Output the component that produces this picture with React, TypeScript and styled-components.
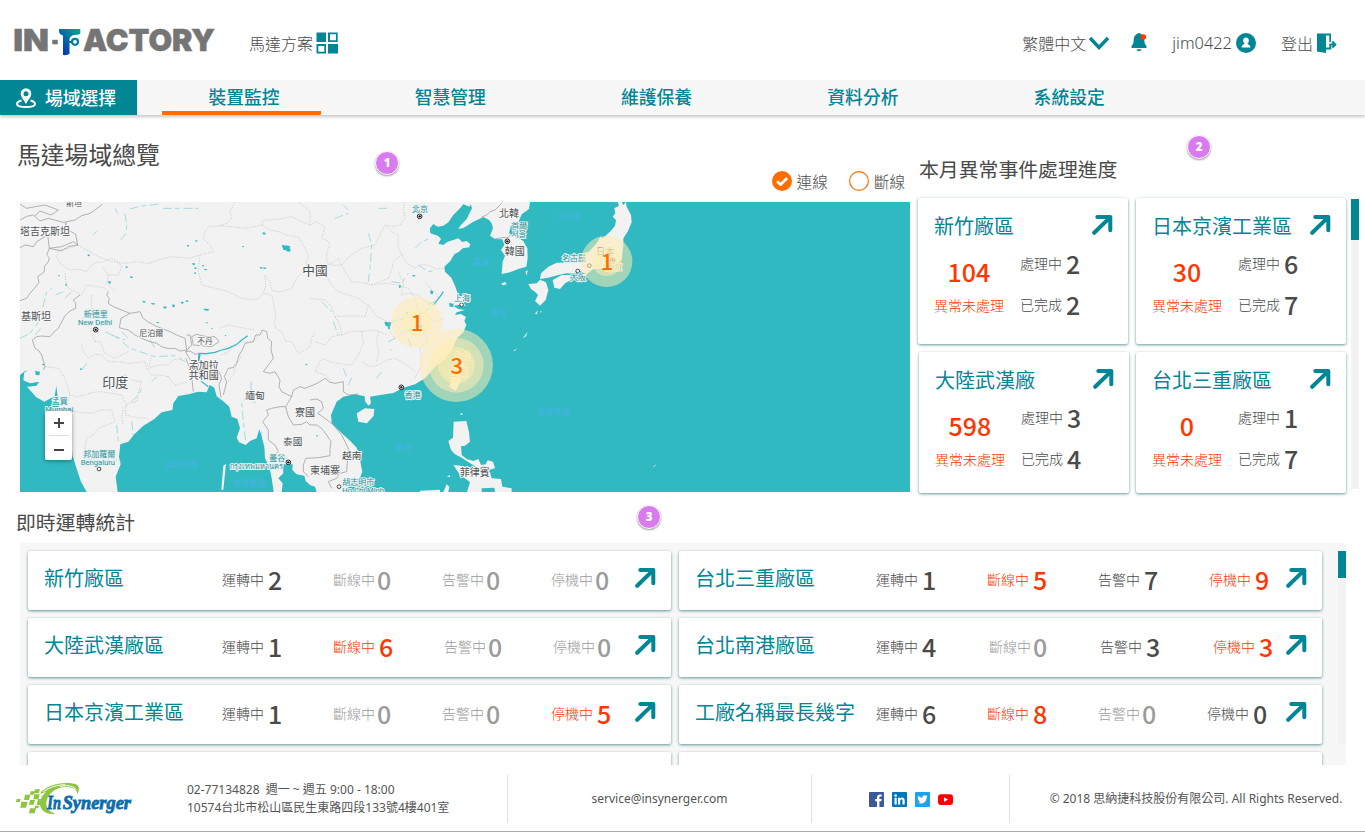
import React from "react";
import styled, { createGlobalStyle } from "styled-components";

const TEAL = "#008695";
const ORANGE = "#ff6d00";
const RED = "#ff3600";
const INK = "#4a4a4a";
const CJK = `"Noto Sans CJK TC", sans-serif`;
const LATIN = `"Noto Sans", "Noto Sans CJK TC", sans-serif`;

const GlobalStyle = createGlobalStyle`
  * { box-sizing: border-box; }
  body { margin: 0; background: #fff; color: ${INK}; font-family: ${CJK}; }
`;

const Page = styled.div`
  width: 1365px;
  height: 832px;
  overflow: hidden;
  display: flex;
  flex-direction: column;
  border-bottom: 1px solid #a9a9a9;
`;

/* ---------- header ---------- */
const Header = styled.header`
  height: 80px;
  display: flex;
  align-items: flex-start;
  padding: 26px 28px 0 14px;
`;
const HeaderItem = styled.div<{ $ml?: number; $gap?: number; $latin?: boolean }>`
  display: flex;
  align-items: center;
  height: 34px;
  margin-left: ${(p) => p.$ml ?? 0}px;
  gap: ${(p) => p.$gap ?? 4}px;
  font: ${(p) => (p.$latin ? `300 16.400px/34px ${LATIN}` : `300 16px/34px ${CJK}`)};
`;
const Spacer = styled.div`
  flex: 1;
`;

/* ---------- navigation ---------- */
const Nav = styled.nav`
  flex: none;
  height: 35px;
  display: flex;
  background: #f7f7f7;
  box-shadow: 0 2px 3px rgba(0, 0, 0, 0.22);
`;
const SiteButton = styled.div`
  width: 137px;
  display: flex;
  align-items: center;
  padding-left: 15px;
  gap: 8px;
  background: ${TEAL};
  color: #fff;
  font: 500 17.800px/33px ${CJK};
`;
const Tabs = styled.div`
  display: flex;
  gap: 47.300px;
  margin-left: 25px;
`;
const Tab = styled.div<{ $active?: boolean }>`
  width: 159px;
  padding-left: 5px;
  text-align: center;
  color: ${TEAL};
  font: 500 17.800px/32px ${CJK};
  border-bottom: 4px solid ${(p) => (p.$active ? ORANGE : "transparent")};
  border-radius: 1px;
`;

/* ---------- overview ---------- */
const Overview = styled.section`
  flex: none;
  height: 381px;
  display: flex;
  position: relative;
`;
const MapColumn = styled.div`
  width: 910px;
  padding-left: 20px;
`;
const MapHeader = styled.div`
  height: 87px;
  display: flex;
  justify-content: space-between;
  align-items: flex-start;
  margin-left: -3px;
`;
const Title = styled.h1`
  margin: 0;
  padding-top: 19px;
  font: 400 23.800px/39px ${CJK};
`;
const Filters = styled.div`
  display: flex;
  gap: 21px;
  padding: 56px 5px 0 0;
`;
const Filter = styled.div`
  display: flex;
  align-items: center;
  gap: 5px;
  font: 300 15.600px/19px ${CJK};
`;
const MapFrame = styled.div`
  width: 890px;
  height: 290px;
  position: relative;
  overflow: hidden;
  background: #31b9c2;
  svg { display: block; }
`;
const ZoomControl = styled.div`
  position: absolute;
  left: 25px;
  top: 209px;
  width: 27px;
  height: 49px;
  display: flex;
  flex-direction: column;
  align-items: center;
  background: #fff;
  border-radius: 2px;
  box-shadow: 0 1px 4px rgba(0, 0, 0, 0.4);
`;
const ZoomButton = styled.div`
  height: 24px;
  width: 20px;
  display: grid;
  place-items: center;
  & + & { border-top: 1px solid #ddd; height: 25px; padding-top: 3px; }
`;

const EventColumn = styled.div`
  flex: 1;
  padding-left: 8px;
`;
const SectionTitle = styled.h2<{ $pt: number; $h: number }>`
  margin: 0 0 0 1px;
  height: ${(p) => p.$h}px;
  padding-top: ${(p) => p.$pt}px;
  font: 400 19.850px/28px ${CJK};
`;
const EventBody = styled.div`
  display: flex;
  gap: 5px;
`;
const EventGrid = styled.div`
  display: grid;
  grid-template-columns: 210px 210px;
  grid-template-rows: 146px 141px;
  gap: 8px;
`;
const cardShadow = `
  background: #fff;
  border-radius: 2px;
  box-shadow: 0 1px 3px rgba(0, 90, 95, 0.62);
`;
const EventCard = styled.article<{ $shift?: boolean }>`
  ${cardShadow}
  height: 100%;
  padding: 13px 15px 0 16px;
  margin: 0 ${(p) => (p.$shift ? "-1px 0 1px" : "0")};
`;
const CardHead = styled.div`
  display: flex;
  justify-content: space-between;
  height: 38px;
  padding-top: 3px;
  svg { margin-top: 1px; }
`;
const SiteName = styled.div`
  color: ${TEAL};
  font: 400 20px/23px ${CJK};
  white-space: nowrap;
`;
const CardBody = styled.div`
  display: flex;
  gap: 16px;
`;
const Pending = styled.div`
  width: 70px;
  color: ${RED};
  text-align: center;
`;
const Big = styled.div`
  height: 47px;
  font: 500 25px/44px ${CJK};
`;
const Caption = styled.div`
  font: 300 14px/18px ${CJK};
`;
const Progress = styled.div`
  display: flex;
  flex-direction: column;
`;
const Line = styled.div`
  height: 40.500px;
  display: flex;
  gap: 4px;
  font: 300 14px/28px ${CJK};
`;
const Num = styled.span`
  font: 500 25px/28px ${CJK};
`;
const Scrollbar = styled.div<{ $h: number; $thumb: number; $top: number }>`
  width: 8px;
  height: ${(p) => p.$h}px;
  margin-top: ${(p) => p.$top}px;
  background: linear-gradient(${TEAL}, ${TEAL}) top / 8px ${(p) => p.$thumb}px no-repeat #f2f2f2;
`;

const Badge = styled.div<{ $x: number; $y: number }>`
  position: absolute;
  left: ${(p) => p.$x - 12}px;
  top: ${(p) => p.$y - 12}px;
  width: 24px;
  height: 24px;
  border: 1px solid #fff;
  border-radius: 50%;
  background: #d97bee;
  box-shadow: 0 1px 2px rgba(0, 0, 0, 0.4);
  color: #fff;
  text-align: center;
  font: 800 11.500px/22px "Open Sans", sans-serif;
`;

/* ---------- live statistics ---------- */
const Stats = styled.section`
  flex: none;
  height: 269px;
  padding-left: 20px;
  position: relative;
`;
const StatsTitleRow = styled.div`
  height: 47px;
  margin-left: -5px;
`;
const StatsPanel = styled.div`
  width: 1326px;
  height: 222px;
  padding: 8px 0 0 8px;
  display: flex;
  gap: 16px;
  background: #f7f7f7;
  overflow: hidden;
`;
const StatsGrid = styled.div`
  display: grid;
  grid-template-columns: 643px 643px;
  grid-auto-rows: 59px;
  gap: 8px;
`;
const StatCard = styled.article`
  ${cardShadow}
  display: flex;
  padding: 0 15px 0 16px;
`;
const StatName = styled(SiteName)<{ $w: number }>`
  flex: none;
  width: ${(p) => p.$w - 16}px;
  line-height: 53px;
`;
type Tone = "normal" | "muted" | "alert";
const toneColor: Record<Tone, string> = { normal: INK, muted: "#9b9b9b", alert: RED };
const Stat = styled.div<{ $tone: Tone; $w: number; $shift: number; $gap: number }>`
  flex: none;
  width: ${(p) => p.$w}px;
  padding-left: ${(p) => p.$shift}px;
  display: flex;
  gap: ${(p) => p.$gap}px;
  white-space: nowrap;
  color: ${(p) => toneColor[p.$tone]};
  font: 300 14px/56px ${CJK};
  ${Num} { line-height: 57px; }
`;
const StatArrow = styled.div`
  flex: 1;
  display: flex;
  justify-content: flex-end;
  padding-top: 17px;
`;

/* ---------- footer ---------- */
const Footer = styled.footer`
  flex: 1;
  display: flex;
  padding-top: 10px;
  font: 400 12px/18px ${LATIN};
  color: #555;
`;
const FootCell = styled.div<{ $w: number; $pl?: number }>`
  flex: none;
  width: ${(p) => p.$w}px;
  height: 48px;
  display: flex;
  align-items: center;
  justify-content: center;
  gap: 8px;
  padding-left: ${(p) => p.$pl ?? 0}px;
  white-space: nowrap;
  & + & { border-left: 1px solid #e1e1e1; }
`;
const Address = styled.div`
  width: 312px;
  white-space: pre;
`;
const Contact = styled(FootCell)`
  justify-content: flex-start;
  gap: 55px;
`;

/* ---------- icons ---------- */
const Arrow = () => (
  <svg width="21" height="20" viewBox="0 0 21 20" fill="none" stroke={TEAL} strokeWidth="4" strokeLinecap="round" strokeLinejoin="round">
    <path d="M5.3 2H18.3V15.3M18 2.4L2.2 17.8" />
  </svg>
);

const FactoryLogo = () => (
  <svg width="202" height="32" viewBox="0 0 202 32">
    <defs>
      <linearGradient id="flag" x1="1" y1="0" x2="0.2" y2="1">
        <stop offset="0" stopColor="#00b07f" />
        <stop offset="0.4" stopColor="#0079a0" />
        <stop offset="1" stopColor="#0735b5" />
      </linearGradient>
    </defs>
    <g fill="#757575" stroke="#757575" strokeWidth="0.500" fontFamily="Inter, sans-serif" fontWeight="900" fontSize="30.4">
      <text x="-0.700" y="25" textLength="35.700" lengthAdjust="spacingAndGlyphs">IN</text>
      <rect x="38.300" y="13.800" width="5.500" height="4.500" stroke="none" />
      <text x="69" y="25" textLength="132" lengthAdjust="spacingAndGlyphs">ACTORY</text>
    </g>
    <path d="M45 3H66.300V7.500Q65 9 62 8.700Q57 9 55.500 12.500V28Q53 29.500 49 29V9.500Q45 8.500 45 5Z" fill="url(#flag)" />
    <circle cx="61" cy="15.800" r="5.200" fill="#fff" />
    <circle cx="61" cy="15.800" r="3" fill="none" stroke="#0080a4" strokeWidth="2.200" />
    <path d="M55 15H58V17H55Z" fill="#0070a8" />
  </svg>
);

const GridIcon = () => (
  <svg width="22" height="22" viewBox="0 0 22 22" fill={TEAL}>
    <rect x="0.500" y="0.500" width="9.500" height="9.500" />
    <rect x="12" y="12" width="10" height="9.500" />
    <path d="M12 .5h9.700V10H12ZM14 2.200V8.300h6V2.200ZM.5 12H10v9.500H.5ZM2.300 14v5.700h6V14Z" fillRule="evenodd" />
  </svg>
);

const PinIcon = () => (
  <svg width="22" height="22" viewBox="0 0 22 22" fill="none">
    <path d="M6.500 13.500C3.500 14.300 2 15.600 2 17c0 2 3.600 3 9 3s9-1 9-3c0-1.400-1.500-2.700-4.500-3.500" stroke="#fff" strokeWidth="2" />
    <path d="M11 1.200a5.300 5.300 0 0 0-5.300 5.300C5.700 10.400 8.800 12.400 11 17c2.200-4.600 5.300-6.600 5.300-10.500A5.300 5.300 0 0 0 11 1.200Z" fill="#fff" />
    <circle cx="11" cy="6.700" r="2.500" fill={TEAL} />
  </svg>
);

const InSynergerLogo = () => (
  <svg width="116" height="34" viewBox="18 21 348 102">
    <g fill="#8cc63f">
      <path d="M20 72h12l-2 9H18ZM34 80h19l-5 18H31ZM45 59h16l-4 16H42ZM60 75h15l-4 14H57ZM75 43h15l-4 12H72ZM62 49h12l-3 10H60ZM73 58h16l-4 15H70ZM60 100h18l-4 15H57ZM84 72h10l-4 18H80ZM75 92h12l-2 8H74Z" />
      <path d="M92 52C112 30 150 22 178 24C208 26 212 38 202 58C202 40 180 34 158 37C128 42 112 62 109 82C107 100 120 112 136 116C110 120 90 106 90 86C90 72 97 60 108 50L92 56Z" />
    </g>
    <path d="M100 50C122 35 140 30 166 29M150 34C176 30 190 33 199 44" fill="none" stroke="#fff" strokeWidth="3" />
    <g fontFamily="'Liberation Serif', serif" fontWeight="700" fontStyle="italic" fontSize="57" fill="#0d6caa" stroke="#0d6caa" strokeWidth="2.500">
      <text x="112" y="103" textLength="41" lengthAdjust="spacingAndGlyphs">In</text>
      <text x="158" y="103" textLength="205" lengthAdjust="spacingAndGlyphs">Synerger</text>
    </g>
  </svg>
);

const Social = () => (
  <>
    <svg width="15" height="15" viewBox="0 0 15 15"><rect width="15" height="15" rx="0.800" fill="#3b5998" /><path d="M8 15V9.200H6.200V7H8V5.400C8 3.500 9.200 2.500 10.900 2.500h1.800v2h-1.200c-.9 0-1.100.5-1.100 1.200V7h2.200l-.3 2.200h-1.900V15Z" fill="#fff" /></svg>
    <svg width="15" height="15" viewBox="0 0 15 15"><rect width="15" height="15" rx="0.800" fill="#0077b5" /><g fill="#fff"><circle cx="3.600" cy="3.500" r="1.300" /><path d="M2.500 5.700h2.200v6.800H2.500ZM6 5.700h2.100v1c.9-1.700 4.600-1.800 4.600 1.700v4.100h-2.200V9c0-2-2.300-1.800-2.300 0v3.500H6Z" /></g></svg>
    <svg width="15" height="15" viewBox="0 0 15 15"><rect width="15" height="15" rx="0.800" fill="#1da1f2" /><path d="M12.600 4.500l-1 1c.1 4.800-5 7.600-9.100 5.300 1.100.1 2.200-.2 3-.9-1-.1-1.700-.7-2-1.500h1C3.200 8 2.700 7.200 2.800 6.200l.9.300C2.800 5.800 2.600 4.500 3.100 3.600 4.200 4.900 5.600 5.700 7.400 5.800c-.5-2.200 2-3.500 3.500-2l1.400-.5-.9 1.200Z" fill="#fff" /></svg>
    <svg width="15" height="15" viewBox="0 0 15 15"><rect y="2.200" width="15" height="10.800" rx="3" fill="#f00" /><path d="M6 5.300l4 2.300-4 2.300Z" fill="#fff" /></svg>
  </>
);

/* ---------- map ---------- */
const LAND = [
  "M15 21H1340L1335 40L1315 60L1300 82L1285 92L1268 95L1255 87L1245 100L1246 115L1270 123L1278 132L1270 146L1285 150L1298 140L1315 135L1330 130L1342 141L1355 138L1366 148L1363 157L1343 160L1332 170L1318 178L1306 198L1288 215L1290 230L1309 248L1320 272L1330 300L1350 312L1345 322L1352 333L1330 330L1315 333L1330 342L1350 345L1325 352L1320 360L1338 357L1353 366L1348 378L1354 390L1345 412L1326 430L1312 462L1292 490L1260 515L1230 550L1200 568L1165 578L1135 594L1095 600L1065 605L1068 625L1060 632L1050 618L1049 604L1020 598L985 605L965 620L948 660L950 685L970 705L1005 737L1025 758L1034 790L1042 830L1035 848L1012 862L998 870L985 891H905L900 875L885 870L872 858L868 842L845 838L832 825L833 808L803 808L805 835L790 850L803 865L800 891H776L770 850L763 815L750 790L748 755L740 725L733 702L725 730L705 738L692 750L672 742L665 728L675 700L667 672L650 665L643 635L628 622L605 604L598 578L584 570L575 592L550 590L520 598L490 603L475 625L472 645L440 652L418 672L385 692L358 718L340 740L316 748L312 785L317 808L302 845L308 891H215L198 860L183 815L172 780L168 710L155 668L132 640L124 573L119 603L88 620L63 606L36 575L65 572L72 560L45 565L25 556L28 532L50 522L75 520L90 527L60 524L30 528L15 540Z",
  "M1365 21L1371 40L1355 72L1336 92L1330 102L1345 99L1375 80L1405 66L1422 75L1430 85L1434 100L1425 122L1440 132L1462 133L1468 150L1458 165L1470 182L1463 200L1460 237L1485 232L1510 222L1534 215L1538 190L1537 160L1525 138L1504 125L1482 114L1488 92L1510 82L1520 58L1542 42L1545 21Z",
  "M1335 21H1370L1364 35L1345 28L1335 40Z",
  "M1025 655L1050 640L1078 642L1076 662L1056 685L1030 680Z",
  "M1302 575L1320 520L1340 500L1348 505L1340 550L1323 588Z",
  "M1316 680L1354 678L1362 712L1365 740L1350 752L1338 754L1340 780L1355 792L1375 798L1390 792L1398 810L1412 808L1418 796L1434 800L1440 820L1420 825L1408 812L1390 820L1370 808L1340 788L1320 778L1308 765L1300 738L1314 728Z",
  "M1315 810L1338 812L1350 830L1370 838L1390 825L1405 830L1425 832L1430 850L1458 852L1462 875L1490 880V891H1440L1438 878L1400 880V891H1356L1365 862L1350 850L1335 840Z",
  "M1285 891L1295 868L1303 875L1300 891ZM1215 887L1275 884V891H1215ZM1384 800L1390 797V808ZM1337 655h5v5h-5Z",
  "M1540 267L1565 265L1575 254L1593 262L1600 285L1592 315L1575 332L1560 318L1569 300L1560 290L1548 282Z",
  "M1613 255L1640 240L1664 240L1668 255L1650 265L1635 282L1618 278Z",
  "M1575 252L1578 235L1600 215L1625 203L1680 202L1700 175L1720 172L1745 145L1756 125L1764 130L1790 105L1800 92L1803 75L1793 65L1801 55L1798 40L1812 32L1808 21H1820L1825 30L1833 21L1835 35L1848 60L1850 82L1838 110L1825 130L1825 150L1820 195L1800 210L1765 222L1735 222L1715 238L1695 228L1680 236L1655 235L1630 240L1600 248Z",
  "M1458 267l12-7 5 8-10 3ZM1531 230l7-4-3 16ZM1560 356l8-10-2 12ZM1575 350l5-2-2 5ZM1523 430l15-20-5 14ZM1495 468l12-10-8 10ZM1515 440l5-6ZM1913 817l10-9-3 6ZM2430 855l5-5ZM1520 285l10-5ZM1295 845l10-5v6ZM625 812l8-6-8 78h-6Z",
];

const COUNTRY_BORDERS = [
  "M15 75L35 64L55 60L75 78L100 70L145 82L180 75L200 62L225 55L240 45L262 28M15 28L35 40L55 36L90 30L130 45L108 60L75 48L60 62",
  "M15 158L30 150L55 155L65 140L98 120L120 108L150 95L155 82",
  "M98 120L103 160L140 168L160 155L188 150L175 140L140 155L103 160L95 180L103 188L100 200L88 215L88 230L68 245L72 262L60 278L45 295L35 310L15 317",
  "M150 85L160 105L182 118L188 150M195 300L175 315L182 325L182 340L165 348L150 362L138 385L130 400L118 410L105 425L80 423L65 425L52 435L60 460L72 468L80 480L90 515L85 525",
  "M280 290L275 300L283 310L280 325L295 335L320 345L345 355M345 355L375 350L383 368L398 380L420 392L440 400L470 412L485 420L510 430L515 465L495 468L480 460L460 461L440 455L425 445L405 440L380 430L360 420L340 405L313 398L318 370L345 355",
  "M530 425L545 418L575 425L600 425L612 440L590 455L560 452L535 450ZM515 420L525 420L530 450L512 470L520 485L530 500M512 470L525 468L540 478L560 475",
  "M535 590L530 545L525 520L512 490M618 608L612 570L620 550L612 530M625 600L635 560L628 545L640 520L655 518L665 505L672 480L682 465L690 445L715 440L722 420L735 420L742 405L755 410L758 430L770 440L768 465L775 490L760 510L745 530L765 535L780 530L795 555L792 575L800 590L830 605L835 585L855 575L870 580L900 568L915 560L930 550L945 562L960 565L985 560L985 590L1000 600L1030 597",
  "M743 680L760 705L760 735L780 750L790 770L775 785L780 800M743 680L760 660L755 645L770 640L795 635L812 635L830 605M812 635L820 665L835 690L860 688L875 680L885 690L905 690L920 700L935 720L948 740L945 760L945 782L910 788L872 790L865 810L865 830L880 845",
  "M885 615L905 612L920 620L925 640L908 655L930 670L955 690L980 720L1000 760L998 790L995 830L975 835L965 850L940 860L950 880",
  "M1400 66L1415 60L1425 50L1440 45L1460 25M1440 132L1460 128L1480 128L1485 120L1492 115",
];
const PROVINCES = [
  "M188 150L215 165L250 185L290 200L330 205L365 200L400 205L440 192L470 185L520 190L555 180L550 230L560 270L600 280L640 290L680 310L715 315L730 312L745 295L770 300L775 320L783 360L778 385L783 400L800 410L812 438L830 440L850 475L870 465L885 455L890 430L900 410",
  "M188 150L160 160L130 165L125 185L135 205L165 225L190 222L215 230L235 205L265 200L290 190L310 200L320 215L310 240L280 240L262 215M150 235L152 260L160 280L200 300L215 270L245 275L270 280L280 290",
  "M280 240L275 265L300 290M555 180L595 170L585 150L565 130L570 110L580 95L615 92L635 85L650 70L645 50L660 21M615 92L650 95L690 100L715 95L740 90L765 105L790 110L820 122L850 125L865 150L880 180L870 225L845 250L830 280L800 290L785 290L770 285L765 260L750 240L752 275L745 295",
  "M740 90L745 75L760 75L795 72L830 65L860 80L885 90L885 50L850 21",
  "M885 90L905 80L930 95L920 130L940 138L945 150L935 175L935 200L955 212L980 210L995 192L1010 180L1040 160L1080 150L1095 120L1110 90L1130 95L1155 90L1170 70L1165 45L1170 21M1110 90L1130 110L1150 120L1148 150L1160 180L1135 200L1130 225L1120 250L1070 270L1040 262L1010 260L990 230L970 190L950 205L930 215L935 245L950 270L970 290L1000 300L1030 310L1060 330L1055 350L1050 365L1010 362L960 365L950 335L930 315L885 310",
  "M1160 180L1175 205L1200 220L1220 208L1240 210L1265 222L1290 220M1150 230L1165 265L1160 300L1185 295L1210 300L1235 322L1260 330L1270 300L1245 280L1230 260M1070 270L1110 265L1150 270L1180 280L1200 310L1210 350L1235 360L1260 380L1290 370M1060 330L1085 365L1120 380L1125 410L1140 430L1170 410L1200 400L1225 415L1240 440L1215 460L1220 490L1215 520L1200 550",
  "M960 365L975 390L980 420L950 425L930 450L900 440M980 420L1010 408L1040 410L1080 405L1120 420M1040 500L1065 515L1090 510L1115 495L1140 490L1170 505L1200 530M1040 410L1045 445L1030 480L1010 510L960 505L920 490L900 530L930 540L950 560M1090 410L1085 440L1092 470L1085 500",
  "M90 515L130 520L150 550L165 600L185 605L210 600L230 592L260 590L290 595L320 600L335 630L330 660L365 668L400 670M200 450L205 470L220 490L240 478L260 480L280 500L310 500L340 505L390 500L395 520L410 540L435 540L460 545",
  "M300 550L330 540L350 555L380 560L370 590L365 620L340 625L325 640L320 665L325 690M165 600L150 640L175 650L230 655L260 645L290 645L300 680L275 690L250 700L235 720L215 730L210 760L210 790L260 800L290 790L320 800M410 480L405 500L400 520L430 510L460 510L475 495L500 490",
  "M460 545L470 560L480 570L520 560M230 300L228 330L240 350L215 360L200 370L210 385L225 400L240 440M340 470L320 480L300 490L270 475L255 440L240 440M640 560L655 540L660 520L680 480M620 480L640 470L655 458L680 440L710 440L730 425M612 400L640 390L690 400L720 405",
];
const RIVERS = [
  "M330 55L335 90L333 115L313 140M345 42L380 33L430 27M445 40H550M300 40L308 55M235 120L245 108",
  "M15 430L45 415L75 375L85 330L95 290L110 280M122 300L145 290M150 310L175 285M60 420L78 400",
  "M270 410L310 430L345 460L390 475L420 485L480 482L510 500M320 410L340 430M405 435L420 460M290 420L330 435",
  "M705 600L680 620L685 680L692 740M708 560V600L720 625M740 710V730M425 545L410 560M350 620L370 600L380 580M200 525L215 505M305 690L310 740M350 680L355 720",
  "M1060 115L1070 150L1066 210L1060 260M1200 160L1220 140L1245 130M1210 210L1240 230L1265 225M1130 260L1160 265L1180 235M1240 330L1265 315L1280 300M1200 365L1230 350L1260 325M1120 385L1160 370L1175 380M1140 430L1120 440M920 320L950 350M955 380L970 420M1180 430L1190 460M985 520L995 545M1000 570L1010 548M1085 550L1100 530M1130 465H1125M960 70L1000 55M985 30L1000 45M1090 40H1125",
];
const MAIN_RIVER = "M550 500L552 475L575 476L600 472L620 465L640 460L665 448L680 435L698 422M555 478L548 520L560 560L580 575M1255 330L1275 305L1285 290";
const LAKES = [[800,150,25,16],[812,160,15,10],[743,112,9,7],[735,216,8,5],[745,217,9,5],[516,150,7,5],[540,136,8,4],[532,204,9,6],[538,217,8,5],[562,210,5,5],[538,232,6,5],[567,222,10,4],[345,244,9,5],[332,214,7,5],[382,318,10,5],[408,324,12,5],[445,334,10,7],[472,328,8,9],[497,320,9,6],[512,316,9,5],[565,341,17,6],[572,382,8,3],[424,381,9,4],[60,528,15,13],[872,506,5,5],[682,153,6,4],[280,258,8,8],[218,178,7,6],[82,506,8,5],[1108,380,20,14],[1118,393,8,9],[1211,388,12,12],[1302,324,14,12],[1246,286,9,12],[1152,270,6,9],[1192,240,9,5],[1175,350,5,7],[905,720,4,5],[130,240,5,4],[152,265,4,9],[590,398,4,4],[630,420,4,4],[195,520,6,5]];

type Label = [string, number, number, number, "land" | "city" | "sea"];
const LABELS: Label[] = [
  ["斯坦", 153, 34, 24, "land"], ["塔吉克斯坦", 15, 119, 30, "land"], ["基斯坦", 18, 376, 30, "land"],
  ["尼泊爾", 373, 424, 24, "land"], ["不丹", 547, 447, 23, "land"], ["孟加拉", 521, 523, 30, "land"],
  ["共和國", 521, 553, 30, "land"], ["印度", 262, 575, 39, "land"], ["緬甸", 691, 613, 29, "land"],
  ["寮國", 840, 662, 30, "land"], ["泰國", 804, 750, 29, "land"], ["越南", 981, 792, 29, "land"],
  ["柬埔寨", 885, 837, 30, "land"], ["中國", 862, 240, 38, "land"], ["北韓", 1452, 66, 30, "land"],
  ["韓國", 1469, 180, 30, "land"], ["菲律賓", 1334, 843, 30, "land"], ["日本", 1743, 180, 28, "land"],
  ["新德里", 206, 367, 24, "city"], ["New Delhi", 189, 390, 23, "city"], ["孟買", 110, 628, 24, "city"],
  ["Mumbai", 91, 652, 23, "city"], ["邦加羅爾", 205, 785, 24, "city"], ["Bengaluru", 197, 810, 23, "city"],
  ["曼谷", 763, 799, 24, "city"], ["กรุงเทพมหานคร", 644, 822, 22, "city"], ["北京", 1191, 50, 24, "city"],
  ["首爾", 1489, 103, 24, "city"], ["서울", 1489, 127, 24, "city"], ["上海", 1317, 318, 24, "city"],
  ["香港", 1169, 608, 24, "city"], ["名古屋", 1641, 198, 24, "city"], ["大阪", 1665, 256, 24, "city"],
  ["胡志明市", 982, 871, 24, "city"], ["Ho Chi Minh", 982, 895, 23, "city"], ["台北", 1316, 491, 25, "city"],
  ["台灣", 1300, 543, 29, "city"], ["東京", 1774, 226, 24, "city"],
  ["孟加拉灣", 452, 815, 24, "sea"], ["安達曼海", 655, 873, 24, "sea"], ["日本海", 1625, 76, 24, "sea"],
  ["黃海", 1375, 211, 24, "sea"], ["東海", 1428, 362, 24, "sea"], ["南海", 1142, 765, 24, "sea"], ["菲律賓海", 1569, 661, 24, "sea"],
];
const labelStyle = {
  land: { fill: "#4d5154", stroke: "#f7f7f7" },
  city: { fill: "#3b9097", stroke: "#e3f3f3" },
  sea: { fill: "#46b3e6", stroke: "none" },
};
const CAPITALS = [[242, 404], [820, 802], [1214, 64], [1477, 139], [1159, 577], [1793, 196]];
const CITIES = [[252, 822], [1340, 329], [1723, 212], [1688, 228], [972, 875]];
const CLUSTERS = [
  { x: 1205, y: 382, label: "1", rings: [77, 43] },
  { x: 1324, y: 511, label: "3", rings: [110, 82, 55] },
  { x: 1775, y: 199, label: "1", rings: [77, 44] },
];

const SiteMap = () => (
  <svg width="890" height="290" viewBox="15 21 2670 870" fontFamily={`Roboto, ${CJK}`}>
    <g fill="#f2f2f2">{LAND.map((d, i) => <path key={i} d={d} />)}</g>
    <g fill="#31b9c2">{LAKES.map(([x, y, w, h], i) => <path key={i} d={`M${x} ${y}l${w} ${h * 0.2}l-2 ${h * 0.8}l${-w * 0.7} -1Z`} />)}</g>
    <g fill="none" stroke="#31b9c2" strokeWidth="2" strokeDasharray="26 9 14 12" opacity="0.600">{RIVERS.map((d, i) => <path key={i} d={d} />)}</g>
    <path d={MAIN_RIVER} fill="none" stroke="#31b9c2" strokeWidth="3.500" />
    <g fill="none" stroke="#c2c2c2" strokeWidth="2.200" strokeDasharray="4 4">{PROVINCES.map((d, i) => <path key={i} d={d} />)}</g>
    <g fill="none" stroke="#9a9a9a" strokeWidth="2.200" strokeLinejoin="round">{COUNTRY_BORDERS.map((d, i) => <path key={i} d={d} />)}</g>
    {CITIES.map(([x, y], i) => <circle key={i} cx={x} cy={y} r="5.500" fill="#fff" stroke="#444" strokeWidth="3" />)}
    {CAPITALS.map(([x, y], i) => <g key={i}><circle cx={x} cy={y} r="7" fill="#fff" stroke="#222" strokeWidth="3" /><circle cx={x} cy={y} r="3.500" fill="#111" /></g>)}
    {LABELS.map(([text, x, y, size, kind]) => (
      <text key={text} x={x} y={y} fontSize={size} strokeWidth={kind === "sea" ? 0 : 6} strokeLinejoin="round" paintOrder="stroke" {...labelStyle[kind]}>{text}</text>
    ))}
    {CLUSTERS.map((c, i) => (
      <g key={i}>
        {c.rings.map((r) => <circle key={r} cx={c.x} cy={c.y} r={r} fill="#ffecb3" fillOpacity="0.540" />)}
        <text x={c.x + 1} y={c.y + 26} textAnchor="middle" fontFamily={CJK} fontSize="66" fontWeight="500" fill={ORANGE}>{c.label}</text>
      </g>
    ))}
  </svg>
);

/* ---------- data ---------- */
const EVENTS = [
  { name: "新竹廠區", pending: 104, open: 2, done: 2 },
  { name: "日本京濱工業區", pending: 30, open: 6, done: 7 },
  { name: "大陸武漢廠", pending: 598, open: 3, done: 4 },
  { name: "台北三重廠區", pending: 0, open: 1, done: 7 },
];
const STAT_LABELS = ["運轉中", "斷線中", "告警中", "停機中"];
type Reading = [number, Tone, number];
const SITES: { name: string; values: Reading[] }[] = [
  { name: "新竹廠區", values: [[2, "normal", 0], [0, "muted", 0], [0, "muted", 0], [0, "muted", 0]] },
  { name: "台北三重廠區", values: [[1, "normal", 0], [5, "alert", 0], [7, "normal", 0], [9, "alert", 2]] },
  { name: "大陸武漢廠區", values: [[1, "normal", 0], [6, "alert", 0], [0, "muted", 2], [0, "muted", 2]] },
  { name: "台北南港廠區", values: [[4, "normal", 0], [0, "muted", 2], [3, "normal", 2], [3, "alert", 6]] },
  { name: "日本京濱工業區", values: [[1, "normal", 0], [0, "muted", 0], [0, "muted", 0], [5, "alert", 0]] },
  { name: "工廠名稱最長幾字", values: [[6, "normal", 0], [8, "alert", 0], [0, "muted", 0], [0, "normal", 0]] },
];
const LEFT_WIDTHS = [111, 109, 109, 76];
const RIGHT_WIDTHS = [111, 111, 109, 76];

export default function App() {
  return (
    <Page>
      <GlobalStyle />
      <Header>
        <FactoryLogo />
        <HeaderItem $ml={33} $gap={3}>馬達方案<GridIcon /></HeaderItem>
        <Spacer />
        <HeaderItem $gap={3}>
          繁體中文
          <svg width="20" height="14" viewBox="0 0 20 14" fill="none" stroke={TEAL} strokeWidth="3.400"><path d="M1 2L10 11.500L19 2" /></svg>
        </HeaderItem>
        <HeaderItem $ml={22}>
          <svg width="16" height="20" viewBox="0 1 16 20" fill={TEAL}>
            <path d="M7 1.500Q8-.5 9 1.500C12 2.500 13.300 5 13.300 8c0 3.500 1 4.700 2.200 6v2H.5v-2C1.700 12.700 2.700 11.500 2.700 8c0-3 1.300-5.500 4.300-6.500ZM5.500 17.300h5Q10 19.300 8 19.300T5.500 17.300Z" />
            <circle cx="12.300" cy="5" r="2.800" fill={RED} />
          </svg>
        </HeaderItem>
        <HeaderItem $ml={25} $latin>
          jim0422
          <svg width="20" height="20" viewBox="0 0 20 20"><circle cx="10" cy="10" r="10" fill={TEAL} /><path d="M10 4.500C8 4.500 7 6 7.200 8c.1 1.300.7 2 1.300 2.600 0 1.200-2.800 1-3 4h9c-.2-3-3-2.800-3-4 .6-.6 1.200-1.300 1.300-2.600C13 6 12 4.500 10 4.500Z" fill="#fff" /></svg>
        </HeaderItem>
        <HeaderItem $ml={25}>
          登出
          <svg width="20" height="20" viewBox="0 0 20 20"><path d="M0 .5H14V9H12.300V2.500H9V20L0 18.500Z" fill={TEAL} /><path d="M9 15.500H13.300V11.500H18M15.300 8.500L18.300 11.500L15.300 14.500" fill="none" stroke={TEAL} strokeWidth="2" /></svg>
        </HeaderItem>
      </Header>

      <Nav>
        <SiteButton><PinIcon />場域選擇</SiteButton>
        <Tabs>
          {["裝置監控", "智慧管理", "維護保養", "資料分析", "系統設定"].map((t, i) => <Tab key={t} $active={i === 0}>{t}</Tab>)}
        </Tabs>
      </Nav>

      <Overview>
        <MapColumn>
          <MapHeader>
            <Title>馬達場域總覽</Title>
            <Filters>
              <Filter>
                <svg width="20" height="20" viewBox="0 0 20 20"><circle cx="10" cy="10" r="10" fill={ORANGE} /><path d="M5 10.200L8.600 13.500L15.200 7" fill="none" stroke="#fff" strokeWidth="2.800" /></svg>
                連線
              </Filter>
              <Filter>
                <svg width="20" height="20" viewBox="0 0 20 20"><circle cx="10" cy="10" r="9.400" fill="#fff" stroke={ORANGE} strokeWidth="1.200" /></svg>
                斷線
              </Filter>
            </Filters>
          </MapHeader>
          <MapFrame>
            <SiteMap />
            <ZoomControl>
              <ZoomButton><svg width="10" height="10" viewBox="0 0 10 10"><path d="M5 0V10M0 5H10" stroke="#444" strokeWidth="2" /></svg></ZoomButton>
              <ZoomButton><svg width="10" height="10" viewBox="0 0 10 10"><path d="M0 5H10" stroke="#444" strokeWidth="2" /></svg></ZoomButton>
            </ZoomControl>
          </MapFrame>
        </MapColumn>
        <EventColumn>
          <SectionTitle $pt={40} $h={83}>本月異常事件處理進度</SectionTitle>
          <EventBody>
            <EventGrid>
              {EVENTS.map((e, i) => (
                <EventCard key={e.name} $shift={i === 2}>
                  <CardHead><SiteName>{e.name}</SiteName><Arrow /></CardHead>
                  <CardBody>
                    <Pending><Big>{e.pending}</Big><Caption>異常未處理</Caption></Pending>
                    <Progress>
                      <Line>處理中<Num>{e.open}</Num></Line>
                      <Line>已完成<Num>{e.done}</Num></Line>
                    </Progress>
                  </CardBody>
                </EventCard>
              ))}
            </EventGrid>
            <Scrollbar $h={290} $thumb={41} $top={1} />
          </EventBody>
        </EventColumn>
        <Badge $x={387} $y={48}>1</Badge>
        <Badge $x={1199} $y={32}>2</Badge>
      </Overview>

      <Stats>
        <StatsTitleRow><SectionTitle $pt={12} $h={47}>即時運轉統計</SectionTitle></StatsTitleRow>
        <StatsPanel>
          <StatsGrid>
            {SITES.map((s, i) => {
              const right = i % 2 === 1;
              return (
                <StatCard key={s.name}>
                  <StatName $w={right ? 197 : 194}>{s.name}</StatName>
                  {s.values.map(([n, tone, shift], k) => (
                    <Stat key={k} $tone={tone} $w={(right ? RIGHT_WIDTHS : LEFT_WIDTHS)[k]} $shift={shift} $gap={tone === "muted" ? 2 : 4}>
                      {STAT_LABELS[k]}<Num>{n}</Num>
                    </Stat>
                  ))}
                  <StatArrow><Arrow /></StatArrow>
                </StatCard>
              );
            })}
            <StatCard />
            <StatCard />
          </StatsGrid>
          <Scrollbar $h={193} $thumb={27} $top={0} />
        </StatsPanel>
        <Badge $x={649} $y={21}>3</Badge>
      </Stats>

      <Footer>
        <Contact $w={507} $pl={16}>
          <InSynergerLogo />
          <Address>{"02-77134828  週一 ~ 週五 9:00 - 18:00\n10574台北市松山區民生東路四段133號4樓401室"}</Address>
        </Contact>
        <FootCell $w={304}>service@insynerger.com</FootCell>
        <FootCell $w={198}><Social /></FootCell>
        <FootCell $w={356} $pl={17}>© 2018 思納捷科技股份有限公司. All Rights Reserved.</FootCell>
      </Footer>
    </Page>
  );
}
